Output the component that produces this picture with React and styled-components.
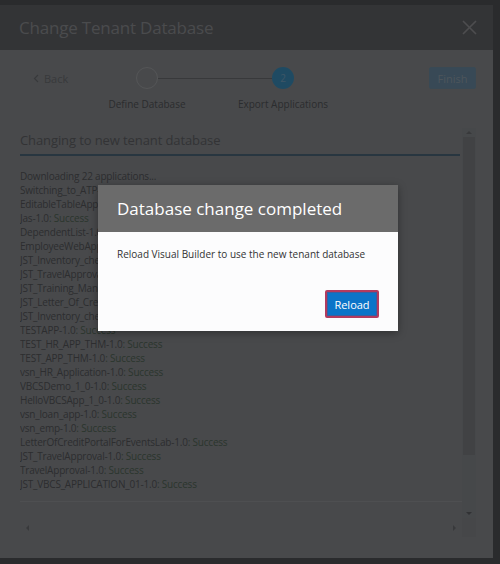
import React from 'react';
import styled, { createGlobalStyle } from 'styled-components';

const GlobalStyle = createGlobalStyle`
  html, body {
    margin: 0;
    padding: 0;
    background: #696c71;
  }
  #root {
    height: 564px;
  }
  * {
    box-sizing: border-box;
  }
`;

const Page = styled.div`
  position: relative;
  height: 564px;
  width: 500px;
  padding: 5px 7px 6px 0;
  font-family: "Open Sans", "Noto Sans", sans-serif;
  overflow: hidden;
`;

const Dialog = styled.div`
  height: 100%;
  display: flex;
  flex-direction: column;
  background: #b4b7bc;
`;

const DialogHeader = styled.div`
  height: 45px;
  flex: none;
  display: flex;
  align-items: center;
  justify-content: space-between;
  padding: 0 16px 0 19px;
  background: #808287;
`;

const DialogTitle = styled.h1`
  margin: 0;
  font-size: 17px;
  font-weight: 400;
  color: #b9bbc0;
  letter-spacing: -0.2px;
`;

const CloseButton = styled.span`
  display: flex;
  color: #c0c1c6;
`;

const DialogBody = styled.div`
  flex: 1;
  display: flex;
  flex-direction: column;
  padding: 17px 17px 21px 20px;
  min-height: 0;
`;

const TrainRow = styled.div`
  display: flex;
  align-items: flex-start;
  height: 61px;
`;

const BackButton = styled.span`
  flex: 0 0 59px;
  margin: 4px 0 0 13px;
  display: flex;
  align-items: center;
  gap: 5px;
  font-size: 11px;
  color: #8d9095;
`;

const Train = styled.div`
  display: flex;
  align-items: flex-start;
`;

const Stop = styled.div`
  width: 110px;
  display: flex;
  flex-direction: column;
  align-items: center;
  gap: 8px;
`;

const Dot = styled.span`
  width: 22px;
  height: 22px;
  border-radius: 50%;
  display: flex;
  align-items: center;
  justify-content: center;
  font-size: 10px;
  color: ${p => (p.$active ? '#9ad6ff' : 'transparent')};
  background: ${p => (p.$active ? '#4eb9f5' : '#b4b7bc')};
  border: ${p => (p.$active ? '2px solid #4eb9f5' : '1.5px solid #d2d4d8')};
`;

const Connector = styled.span`
  flex: none;
  width: 114px;
  height: 1px;
  margin: 11px -44px 0;
  background: #8d9095;
`;

const StopLabel = styled.span`
  font-size: 10px;
  color: #6d7075;
  white-space: nowrap;
`;

const FinishButton = styled.button`
  margin-left: auto;
  width: 47px;
  height: 22px;
  border: 1px solid #90b6d2;
  border-radius: 2px;
  background: #8cb6d6;
  color: #bfd4e4;
  font-family: inherit;
  font-size: 11px;
  padding: 0;
`;

const ScrollPane = styled.div`
  flex: 1;
  min-height: 0;
  display: grid;
  grid-template-columns: 1fr 14px;
  grid-template-rows: 1fr 19px;
`;

const ScrollContent = styled.div`
  overflow: hidden;
  padding-top: 3px;
`;

const SectionTitle = styled.h2`
  margin: 0;
  font-size: 13px;
  font-weight: 400;
  letter-spacing: -0.1px;
  color: #7f8186;
  padding-bottom: 5px;
  border-bottom: 2px solid #6487a0;
  margin-right: 2px;
`;

const Log = styled.div`
  padding-top: 13px;
  font-size: 10px;
  line-height: 14px;
  color: #707277;
  white-space: nowrap;
`;

const LogLine = styled.div`
  letter-spacing: -0.2px;
`;

const Success = styled.span`
  color: #6c8672;
`;

const LogFooter = styled.div`
  margin-top: 10px;
  border-top: 1px solid #c2c5ca;
  height: 20px;
`;

const VScroll = styled.div`
  display: flex;
  flex-direction: column;
  align-items: center;
  background: #b0b3b8;
`;

const Thumb = styled.div`
  width: 12px;
  height: 318px;
  background: #a3a6ab;
  margin-top: 3px;
`;

const Arrow = styled.span`
  width: 0;
  height: 0;
  border-left: 3px solid transparent;
  border-right: 3px solid transparent;
  ${p => (p.$dir === 'up'
    ? 'border-bottom: 3px solid #8c8f94; margin-top: 3px;'
    : 'border-top: 3px solid #7a7d82; margin-top: auto; margin-bottom: 3px;')}
`;

const HScroll = styled.div`
  display: flex;
  align-items: center;
  justify-content: space-between;
  padding: 0 6px;
`;

const SideArrow = styled.span`
  width: 0;
  height: 0;
  border-top: 3px solid transparent;
  border-bottom: 3px solid transparent;
  ${p => (p.$dir === 'left'
    ? 'border-right: 3px solid #8c8f94;'
    : 'border-left: 3px solid #8c8f94;')}
`;

const Corner = styled.div`
  background: #aeb1b6;
`;

const Overlay = styled.div`
  position: absolute;
  inset: 0;
  background: rgba(0, 0, 0, 0.6);
`;

const Modal = styled.div`
  position: absolute;
  left: 98px;
  top: 185px;
  width: 300px;
  height: 146px;
  display: flex;
  flex-direction: column;
  background: #fcfcfd;
  box-shadow: 0 2px 8px rgba(0, 0, 0, 0.35);
`;

const ModalHeader = styled.div`
  height: 47px;
  display: flex;
  align-items: center;
  padding: 0 19px;
  background: #6b6b6b;
`;

const ModalTitle = styled.h3`
  margin: 0;
  font-size: 17px;
  font-weight: 400;
  color: #ffffff;
`;

const ModalBody = styled.div`
  flex: 1;
  display: flex;
  flex-direction: column;
  padding: 15px 19px 13px;
`;

const ModalText = styled.p`
  margin: 0;
  font-size: 10px;
  color: #333333;
`;

const ReloadButton = styled.button`
  margin-top: auto;
  align-self: flex-end;
  width: 54px;
  height: 28px;
  padding: 0;
  border: 2px solid #b23b5f;
  border-radius: 2px;
  background: #0b74c8;
  box-shadow: inset 0 0 0 1px #3a5fa0;
  color: #ffffff;
  font-family: inherit;
  font-size: 11px;
`;

const apps = [
  ['Downloading 22 applications...', null],
  ['Switching_to_ATP-1.0', ': Success'],
  ['EditableTableApp-1.0', ': Success'],
  ['Jas-1.0', ': Success'],
  ['DependentList-1.0', ': Success'],
  ['EmployeeWebApp-1.0', ': Success'],
  ['JST_Inventory_check-1.0', ': Success'],
  ['JST_TravelApproval_App-1.0', ': Success'],
  ['JST_Training_Management-1.0', ': Success'],
  ['JST_Letter_Of_Credit-1.0', ': Success'],
  ['JST_Inventory_check_2-1.0', ': Success'],
  ['TESTAPP-1.0', ': Success'],
  ['TEST_HR_APP_THM-1.0', ': Success'],
  ['TEST_APP_THM-1.0', ': Success'],
  ['vsn_HR_Application-1.0', ': Success'],
  ['VBCSDemo_1_0-1.0', ': Success'],
  ['HelloVBCSApp_1_0-1.0', ': Success'],
  ['vsn_loan_app-1.0', ': Success'],
  ['vsn_emp-1.0', ': Success'],
  ['LetterOfCreditPortalForEventsLab-1.0', ': Success'],
  ['JST_TravelApproval-1.0', ': Success'],
  ['TravelApproval-1.0', ': Success'],
  ['JST_VBCS_APPLICATION_01-1.0', ': Success'],
];

const CloseIcon = () => (
  <svg width="15" height="15" viewBox="0 0 15 15">
    <path d="M1 1 L14 14 M14 1 L1 14" stroke="currentColor" strokeWidth="1.6" fill="none" />
  </svg>
);

const ChevronLeft = () => (
  <svg width="6" height="9" viewBox="0 0 6 9">
    <path d="M5 1 L1.5 4.5 L5 8" stroke="currentColor" strokeWidth="1.2" fill="none" />
  </svg>
);

export default function App() {
  return (
    <>
      <GlobalStyle />
      <Page>
        <Dialog>
          <DialogHeader>
            <DialogTitle>Change Tenant Database</DialogTitle>
            <CloseButton>
              <CloseIcon />
            </CloseButton>
          </DialogHeader>
          <DialogBody>
            <TrainRow>
              <BackButton>
                <ChevronLeft />
                Back
              </BackButton>
              <Train>
                <Stop>
                  <Dot>1</Dot>
                  <StopLabel>Define Database</StopLabel>
                </Stop>
                <Connector />
                <Stop>
                  <Dot $active>2</Dot>
                  <StopLabel>Export Applications</StopLabel>
                </Stop>
              </Train>
              <FinishButton>Finish</FinishButton>
            </TrainRow>
            <ScrollPane>
              <ScrollContent>
                <SectionTitle>Changing to new tenant database</SectionTitle>
                <Log>
                  {apps.map(([name, status]) => (
                    <LogLine key={name}>
                      {name}
                      {status && <Success>{status}</Success>}
                    </LogLine>
                  ))}
                </Log>
                <LogFooter />
              </ScrollContent>
              <VScroll>
                <Arrow $dir="up" />
                <Thumb />
                <Arrow $dir="down" />
              </VScroll>
              <HScroll>
                <SideArrow $dir="left" />
                <SideArrow $dir="right" />
              </HScroll>
              <Corner />
            </ScrollPane>
          </DialogBody>
        </Dialog>
        <Overlay />
        <Modal>
          <ModalHeader>
            <ModalTitle>Database change completed</ModalTitle>
          </ModalHeader>
          <ModalBody>
            <ModalText>Reload Visual Builder to use the new tenant database</ModalText>
            <ReloadButton>Reload</ReloadButton>
          </ModalBody>
        </Modal>
      </Page>
    </>
  );
}
